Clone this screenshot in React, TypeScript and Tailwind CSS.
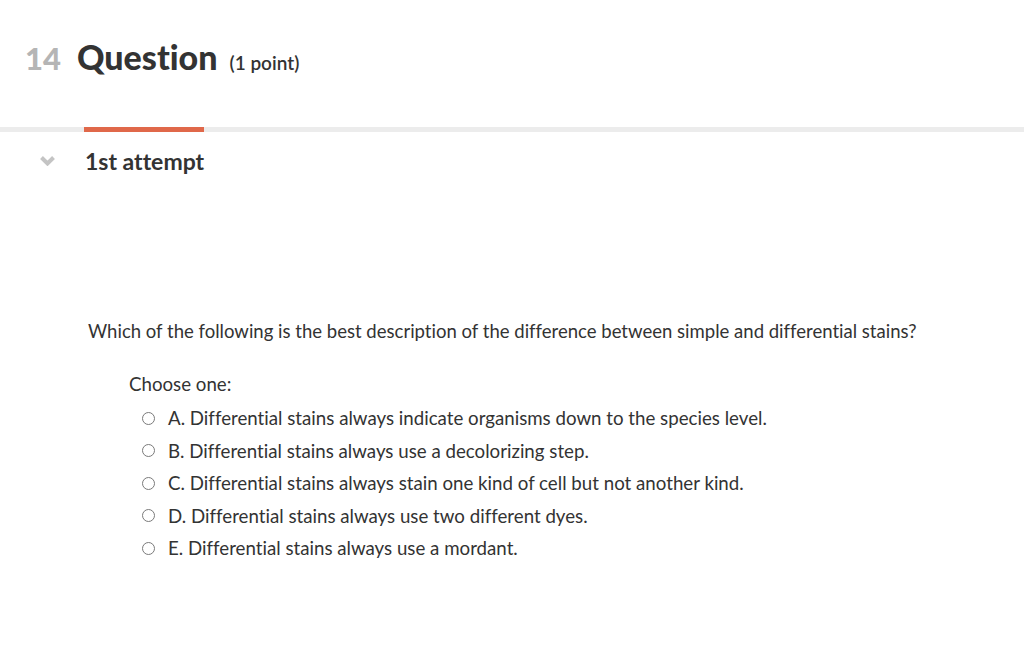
import React from 'react';

const options = [
  'A. Differential stains always indicate organisms down to the species level.',
  'B. Differential stains always use a decolorizing step.',
  'C. Differential stains always stain one kind of cell but not another kind.',
  'D. Differential stains always use two different dyes.',
  'E. Differential stains always use a mordant.',
];

export default function App() {
  return (
    <div
      className="w-[1024px] h-[647px] bg-white text-[#333333] overflow-hidden [font-variant-ligatures:none]"
      style={{ fontFamily: 'Lato, "Open Sans", sans-serif' }}
    >
      {/* Header */}
      <header className="flex items-baseline pl-[25px] pt-[40px] h-[127px]">
        <span className="text-[31px] font-black text-[#b5b5b5] leading-none">14</span>
        <h1 className="ml-[16px] text-[34px] font-black text-[#333333] leading-none">Question</h1>
        <span className="ml-[12px] text-[19px] font-semibold text-[#333333] leading-none">(1 point)</span>
      </header>

      {/* Tab bar */}
      <div className="h-[5px] bg-[#ececec] flex">
        <div className="ml-[84px] w-[120px] h-[5px] bg-[#e0684a]" />
      </div>

      {/* Attempt row */}
      <div className="flex items-center pt-[18px] h-[40px]">
        <div className="w-[84px] flex pl-[40px]">
          <svg width="15" height="10" viewBox="0 0 15 10" fill="none">
            <path d="M1.5 1.5l6 6 6-6" stroke="#c4c4c4" strokeWidth="4" />
          </svg>
        </div>
        <h2 className="ml-[1px] text-[23px] font-bold text-[#333333] leading-none">1st attempt</h2>
      </div>

      {/* Question */}
      <div className="pl-[88px] pt-[148px]">
        <p className="text-[18.55px] leading-[22px] text-[#333333]">
          Which of the following is the best description of the difference between simple and differential stains?
        </p>
        <div className="pl-[41px] pt-[31px]">
          <p className="text-[18.7px] leading-[22px]">Choose one:</p>
          <ul className="mt-[12px] flex flex-col gap-[10.5px]">
            {options.map((o) => (
              <li key={o} className="flex items-center h-[22px]">
                <span className="ml-[13px] w-[13px] h-[13px] rounded-full border border-[#7a7a7a] bg-white" />
                <span className="ml-[13px] text-[18.7px] leading-[22px]">{o}</span>
              </li>
            ))}
          </ul>
        </div>
      </div>
    </div>
  );
}
